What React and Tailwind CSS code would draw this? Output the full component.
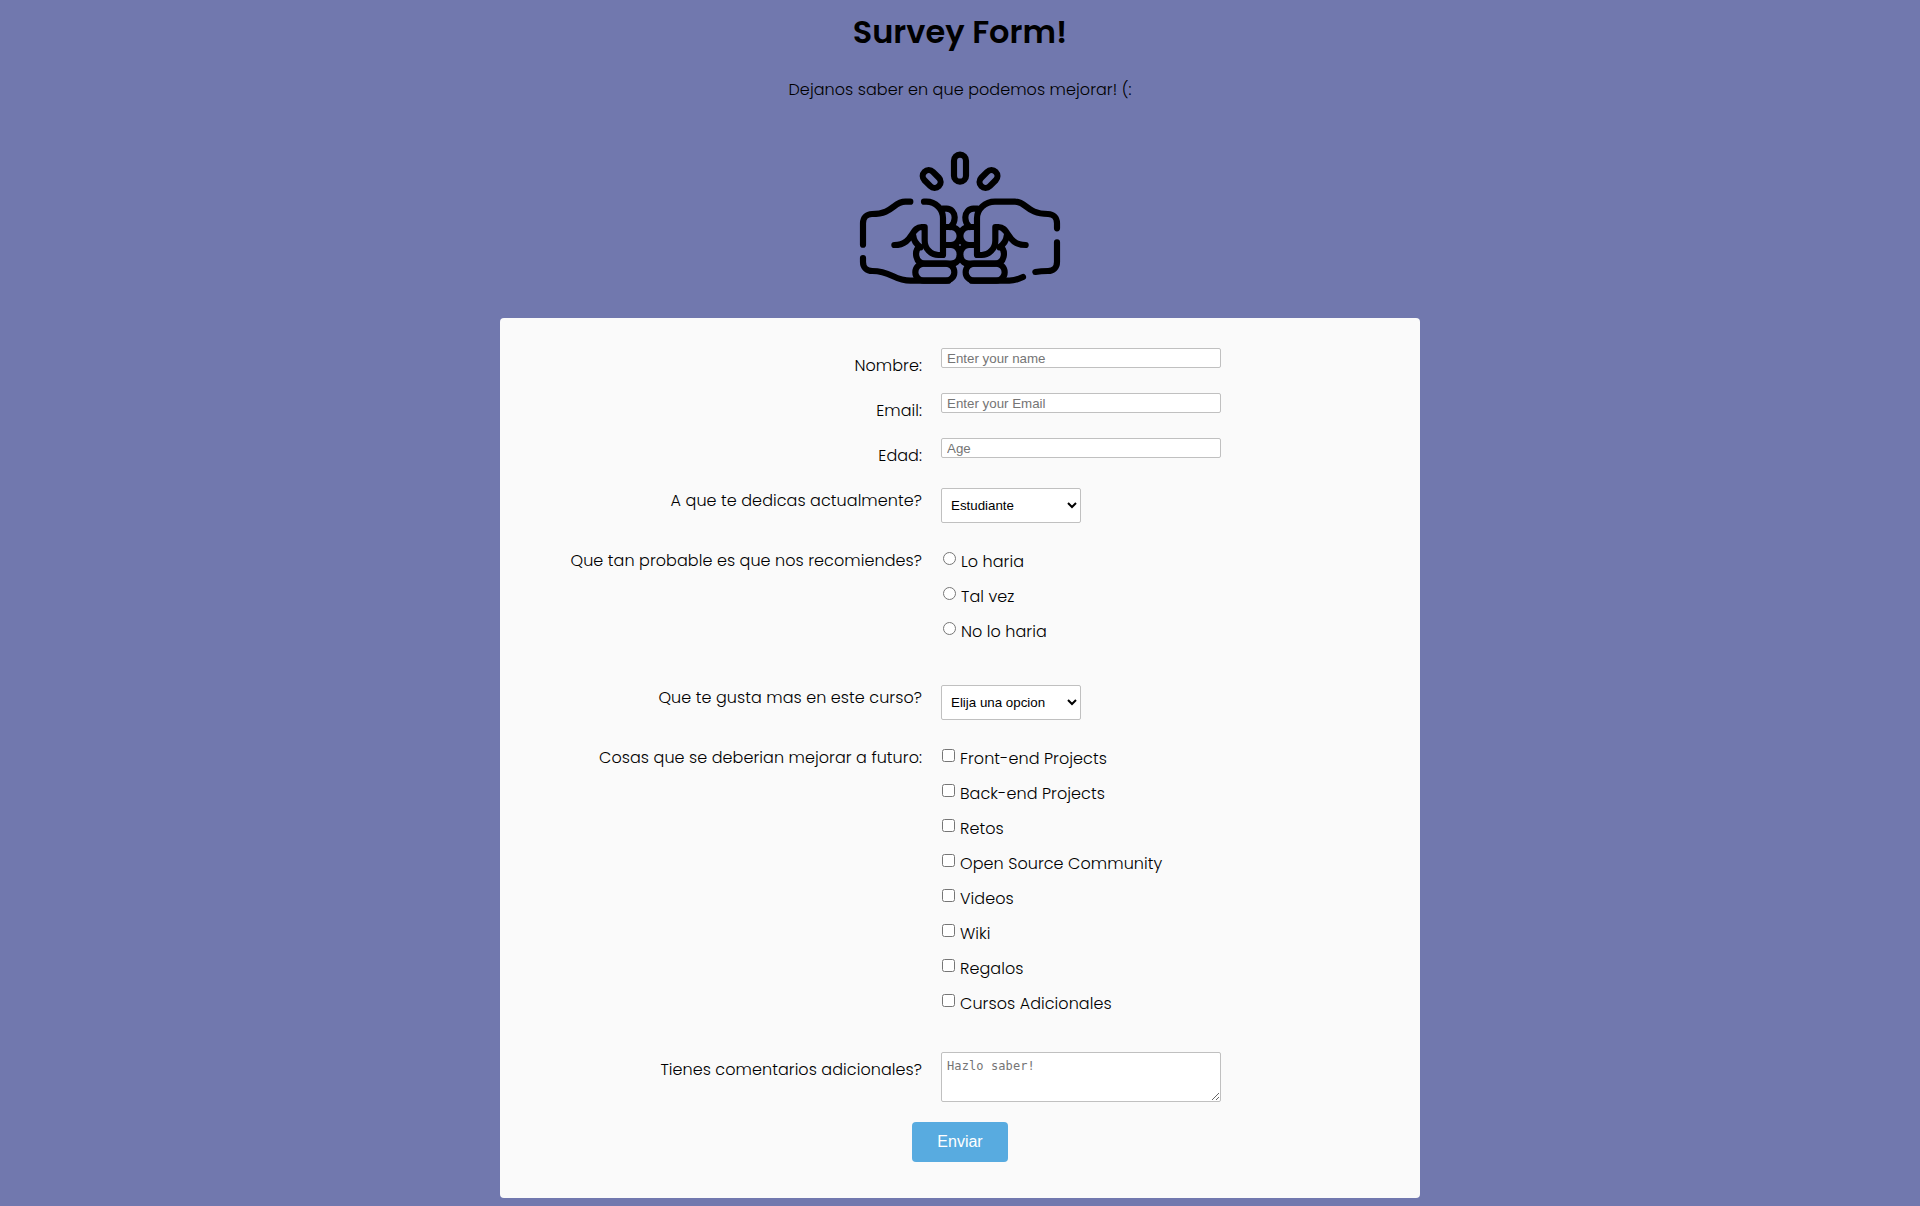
import React from "react";

const experience = ["Lo haria", "Tal vez", "No lo haria"];

const improvements = [
  "Front-end Projects",
  "Back-end Projects",
  "Retos",
  "Open Source Community",
  "Videos",
  "Wiki",
  "Regalos",
  "Cursos Adicionales",
];

const fieldClass =
  "block rounded-[2px] border border-[#c0c0c0] bg-white font-['Liberation_Sans',Arial,sans-serif] text-[13.33px] font-normal tracking-normal text-black placeholder:text-[#757575] placeholder:opacity-100";

function FistBump() {
  return (
    <svg
      width="240"
      height="160"
      viewBox="0 0 720 480"
      fill="none"
      stroke="#000"
      strokeWidth="18.5"
      strokeLinecap="round"
      strokeLinejoin="round"
    >
      <rect x="342" y="44" width="36" height="81" rx="18" />
      <rect x="244.5" y="99" width="61" height="36" rx="18" transform="rotate(45 275 117)" />
      <rect x="415" y="99" width="61" height="36" rx="18" transform="rotate(-45 445.5 117)" />

      <path d="M211 185H196C160 185 160 222 96 222C80 222 69 234 69 250V314" />
      <path d="M69 354V366C69 382 80 393 97 393C155 393 160 422 212 422H325" />
      <path d="M252 185H259C287 185 309 207 309 235V345H295C272 345 254 325 254 302V261H245C212 261 220 315 163 315" />
      <path d="M220 288C221 303 228 312 242 322" />
      <path d="M238 320C222 333 225 371 255 371H333C350 371 359 358 359 343C359 327 348 315 333 315H311" />
      <path d="M311 261H333C348 261 359 273 359 288C359 303 348 315 333 315" />
      <path d="M308 206H320C334 206 344 218 344 232C344 244 340 254 331 261" />
      <rect x="226" y="371" width="117" height="51" rx="25.5" />

      <path d="M651 265V250C651 234 640 222 624 222C560 222 560 185 525 185H465C435 185 411 207 411 235V345H425C448 345 466 325 466 302V261H475C508 261 500 315 557 315" />
      <path d="M651 307V366C651 382 640 393 624 393C606 393 597 394 586 396" />
      <path d="M549 411C535 418 522 422 508 422H395" />
      <path d="M500 288C499 303 492 312 478 322" />
      <path d="M482 320C498 333 495 371 465 371H387C370 371 361 358 361 343C361 327 372 315 387 315H409" />
      <path d="M409 261H387C372 261 361 273 361 288C361 303 372 315 387 315" />
      <path d="M412 206H400C386 206 376 218 376 232C376 244 380 254 389 261" />
      <rect x="377" y="371" width="117" height="51" rx="25.5" />
    </svg>
  );
}

function Row({ label, height, offset = "pt-px", children }) {
  return (
    <div className={`flex gap-[19px] ${height}`}>
      <div className={`w-[422px] text-right leading-6 ${offset}`}>{label}</div>
      <div>{children}</div>
    </div>
  );
}

function Choice({ type, text, spacing }) {
  return (
    <label className={`flex h-[35px] ${spacing}`}>
      <input type={type} name={type} className="mt-1 size-[13px] shrink-0" />
      <span className="pt-0.5 leading-6 whitespace-nowrap">{text}</span>
    </label>
  );
}

export default function App() {
  return (
    <main className="flex h-[1206px] flex-col items-center overflow-hidden bg-[#7178ae] font-['Poppins','Inter',sans-serif] text-base font-light tracking-[0.06px] text-black">
      <h1 className="mt-2 text-[32px] leading-[48px] font-semibold tracking-normal">Survey Form!</h1>
      <p className="mt-[22px] leading-6">Dejanos saber en que podemos mejorar! (:</p>
      <div className="mt-[38px]">
        <FistBump />
      </div>

      <form className="mt-[18px] h-[880px] w-[920px] rounded-[4px] bg-[#fafafa] pt-[30px]">
        <Row label="Nombre:" height="h-[45px]" offset="pt-1.5">
          <input className={`${fieldClass} h-5 w-[280px] pl-[5px]`} placeholder="Enter your name" />
        </Row>
        <Row label="Email:" height="h-[45px]" offset="pt-1.5">
          <input className={`${fieldClass} h-5 w-[280px] pl-[5px]`} placeholder="Enter your Email" />
        </Row>
        <Row label="Edad:" height="h-[50px]" offset="pt-1.5">
          <input className={`${fieldClass} h-5 w-[280px] pl-[5px]`} placeholder="Age" />
        </Row>
        <Row label="A que te dedicas actualmente?" height="h-[60px]">
          <select className={`${fieldClass} h-[35px] w-[140px] pl-[5px]`}>
            <option>Estudiante</option>
          </select>
        </Row>
        <Row label="Que tan probable es que nos recomiendes?" height="h-[137px]">
          {experience.map((text) => (
            <Choice key={text} type="radio" text={text} spacing="ml-0.5 gap-[5px]" />
          ))}
        </Row>
        <Row label="Que te gusta mas en este curso?" height="h-[60px]">
          <select className={`${fieldClass} h-[35px] w-[140px] pl-[5px]`}>
            <option>Elija una opcion</option>
          </select>
        </Row>
        <Row label="Cosas que se deberian mejorar a futuro:" height="h-[307px]">
          {improvements.map((text) => (
            <Choice key={text} type="checkbox" text={text} spacing="ml-px gap-[5px]" />
          ))}
        </Row>
        <Row label="Tienes comentarios adicionales?" height="h-[70px]" offset="pt-1.5">
          <textarea
            className="block h-[50px] w-[280px] resize rounded-[2px] border border-[#c0c0c0] bg-white px-[5px] py-[5px] font-['DejaVu_Sans_Mono',monospace] text-[12px] leading-[16px] font-normal tracking-[0.1px] placeholder:text-[#757575] placeholder:opacity-100"
            placeholder="Hazlo saber!"
          />
        </Row>
        <button
          type="button"
          className="mx-auto block h-10 w-24 rounded-[4px] bg-[#58abe0] font-['Liberation_Sans',Arial,sans-serif] text-base font-normal tracking-normal text-white"
        >
          Enviar
        </button>
      </form>
    </main>
  );
}
